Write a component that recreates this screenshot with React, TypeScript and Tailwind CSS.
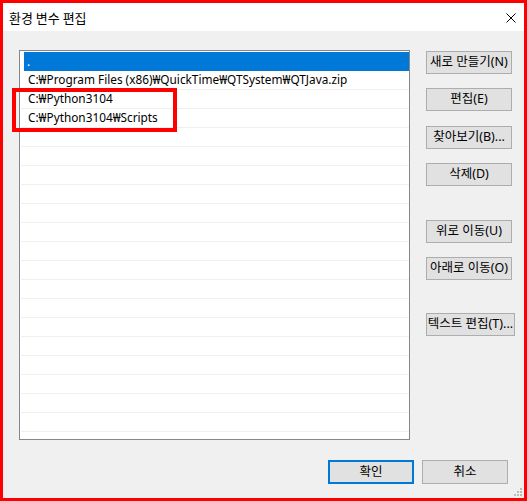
import React from "react";

const paths = [
  ".",
  "C:₩Program Files (x86)₩QuickTime₩QTSystem₩QTJava.zip",
  "C:₩Python3104",
  "C:₩Python3104₩Scripts",
];

function WinButton({ label, className = "" }: { label: string; className?: string }) {
  return (
    <button
      type="button"
      className={`h-[23px] w-[86px] border border-[#adadad] bg-[#e1e1e1] text-[12.5px] leading-none text-black flex items-center justify-center whitespace-nowrap ${className}`}
    >
      {label}
    </button>
  );
}

export default function App() {
  const rows = [...paths, ...Array(18).fill("")];

  return (
    <div
      className="relative w-[527px] h-[501px] border-[3px] border-[#ff0000] bg-[#f0f0f0] flex flex-col overflow-hidden text-black"
      style={{ fontFamily: '"Noto Sans", "Noto Sans CJK KR", sans-serif' }}
    >
      {/* title bar */}
      <div className="h-[28px] bg-white flex items-center justify-between pl-[6px] pr-[8px]">
        <span className="text-[13px] leading-none" style={{ fontFamily: '"Noto Sans CJK KR", sans-serif' }}>
          환경 변수 편집
        </span>
        <svg width="10" height="10" viewBox="0 0 10 10" className="mt-[2px]">
          <path d="M0.5 0.5 L9.5 9.5 M9.5 0.5 L0.5 9.5" stroke="#000" strokeWidth="1" />
        </svg>
      </div>

      <div className="flex pt-[19px] pl-[16px]">
        {/* path list */}
        <div className="w-[391px] h-[390px] border border-[#828790] bg-white pt-[1px] overflow-hidden">
          {rows.map((p, i) =>
            i === 0 ? (
              <div key={i} className="h-[19px] pl-[4px]">
                <div className="h-full bg-[#0078d7] text-white text-[11.8px] pl-[3px] flex items-center">{p}</div>
              </div>
            ) : (
              <div
                key={i}
                className="h-[19px] ml-[1px] border-b border-[#f0f0f0] pl-[7px] text-[11.8px] flex items-center whitespace-nowrap"
              >
                {p}
              </div>
            )
          )}
        </div>

        {/* side buttons */}
        <div className="ml-[16px] mt-[1px] flex flex-col items-start">
          <WinButton label="새로 만들기(N)" />
          <WinButton label="편집(E)" className="mt-[14px]" />
          <WinButton label="찾아보기(B)..." className="mt-[15px]" />
          <WinButton label="삭제(D)" className="mt-[14px]" />
          <WinButton label="위로 이동(U)" className="mt-[34px]" />
          <WinButton label="아래로 이동(O)" className="mt-[14px]" />
          <WinButton label="텍스트 편집(T)..." className="mt-[33px] w-[89px]" />
        </div>
      </div>

      {/* footer */}
      <div className="flex justify-end gap-[8px] pr-[16px] mt-[20px]">
        <button
          type="button"
          className="h-[24px] w-[86px] border-2 border-[#0078d7] bg-[#e1e1e1] text-[12.5px] leading-none flex items-center justify-center"
        >
          확인
        </button>
        <button
          type="button"
          className="h-[24px] w-[86px] border border-[#adadad] bg-[#e1e1e1] text-[12.5px] leading-none flex items-center justify-center"
        >
          취소
        </button>
      </div>

      {/* resize grip */}
      <svg width="9" height="9" viewBox="0 0 9 9" className="absolute right-[1px] bottom-[1px]">
        <rect x="6" y="0" width="2" height="2" fill="#bcbcbc" />
        <rect x="3" y="3" width="2" height="2" fill="#bcbcbc" />
        <rect x="6" y="3" width="2" height="2" fill="#bcbcbc" />
        <rect x="0" y="6" width="2" height="2" fill="#bcbcbc" />
        <rect x="3" y="6" width="2" height="2" fill="#bcbcbc" />
        <rect x="6" y="6" width="2" height="2" fill="#bcbcbc" />
      </svg>

      {/* highlight box */}
      <div className="absolute left-[9px] top-[85px] w-[165px] h-[44px] border-4 border-[#ff0000]" />
    </div>
  );
}
